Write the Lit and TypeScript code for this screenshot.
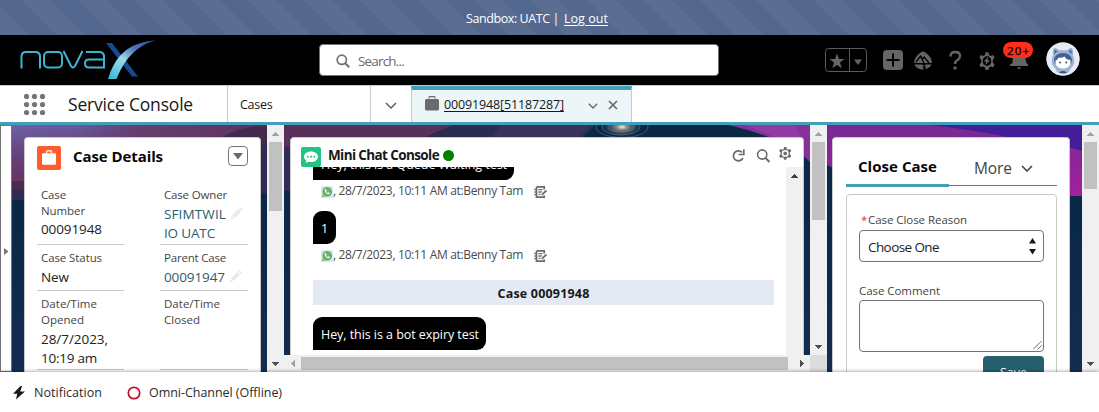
import { LitElement, html, css, svg } from "lit";
import { customElement, property } from "lit/decorators.js";

/** One line of text whose tracking is tuned to a given advance width. */
@customElement("ui-text")
class UiText extends LitElement {
  @property({ type: Number }) w = 0;
  static styles = css`
    :host { display: inline-block; white-space: pre; vertical-align: top; flex: none; }
    span { display: inline-block; }
    :host([link]) span { text-decoration: underline; text-underline-offset: 2px; }
  `;
  render() { return html`<span><slot></slot></span>`; }
  firstUpdated() {
    const n = (this.textContent || "").length;
    const natural = this.renderRoot.querySelector("span")!.getBoundingClientRect().width;
    if (this.w && n) {
      this.style.letterSpacing = `${(this.w - natural) / n}px`;
      this.style.width = `${this.w}px`;
    }
  }
}

@customElement("scroll-bar")
class ScrollBar extends LitElement {
  @property({ type: Number }) thumb = 0;
  @property({ type: Boolean }) noend = false;
  @property({ type: Boolean }) active = false;
  static styles = css`
    :host { display: flex; flex-direction: column; align-items: center; width: 17px; background: #f0f0f0; box-sizing: border-box; flex: none; }
    svg { display: block; width: 17px; height: 17px; flex: none; }
    .thumb { width: 13px; background: #c1c1c1; flex: none; }
    .space { flex: 1; }
  `;
  render() {
    return html`
      <svg viewBox="0 0 17 17" shape-rendering="crispEdges"><path d="M5 11h7v-1h-1v-1h-1v-1H9V7H8v1H7v1H6v1H5z" fill=${this.active ? "#404040" : "#a3a3a3"}/></svg>
      <div class="thumb" style="height:${this.thumb}px"></div>
      <div class="space"></div>
      ${this.noend ? "" : html`<svg viewBox="0 0 17 17" shape-rendering="crispEdges"><path d="M5 7h7v1h-1v1h-1v1H9v1H8v-1H7V9H6V8H5z" fill="#505050"/></svg>`}
    `;
  }
}

const chevron = (w: number, c: string, sw = 1.6) => html`<svg width=${w} height=${w * 0.6} viewBox="0 0 12 7.2" fill="none" stroke=${c} stroke-width=${sw}><path d="M1 1l5 5 5-5"/></svg>`;

const searchIcon = (s: number, c = "#6f6f6f") => html`<svg width=${s} height=${s} viewBox="0 0 14 14" fill="none" stroke=${c} stroke-width="1.7"><circle cx="5.8" cy="5.8" r="4.6"/><path d="M9.2 9.2l4 4" stroke-width="2"/></svg>`;

const gearPath = svg`<path fill-rule="evenodd" d="M7.6 0h2.8l.6 2.4 1.6.9 2.6-.8 1.4 2.4-1.8 1.9v2.4l1.8 1.9-1.4 2.4-2.6-.8-1.6.9-.6 2.4H7.600l-.6-2.4-1.600-.9-2.600.8-1.400-2.400 1.800-1.900V6.800L1.400 4.900l1.400-2.400 2.600.8 1.600-.9zM9 3.700a4.300 4.300 0 100 8.600 4.300 4.300 0 000-8.600z"/>`;

const pencil = html`<svg class="pencil" width="13" height="13" viewBox="0 0 13 13" fill="#e9e9e9"><path d="M2 8.300l6.300-6.300 2.700 2.700L4.700 11zM9 1.300l.9-.9q.5-.4 1 0l1.700 1.700q.4.5 0 1l-.9.9zM1.500 9.200l2.300 2.300-3.300 1z"/></svg>`;

const whatsapp = html`<svg width="12" height="12" viewBox="0 0 12 12"><rect width="12" height="12" fill="#dfe8ee"/><circle cx="6.200" cy="5.800" r="4.900" fill="#69b46c"/><path d="M.6 11.600l1-3.800 2.800 2.800z" fill="#8cc58e"/><path d="M4 3.200q-.9 1.100.3 2.700 1.500 2.200 3.300 2.400 1.300-.2 1.200-1.300L7.400 6.300l-.7.700Q5.600 6.500 5.100 5.400l.5-.7-.6-1.500z" fill="#fff"/></svg>`;

const noteIcon = html`<svg width="13" height="12" viewBox="0 0 13 12" fill="none" stroke="#6b6b6b"><path d="M2.500.9h7.700v2.600M2.500.9v10.200h7.700V9.400" stroke-width="1.700"/><path d="M.3 3.300h2.500M.3 6h2.500M.3 8.700h2.500" stroke-width="1.300"/><path d="M4.500 3.700h4M4.500 6h3.200M4.500 8.300h2" stroke-width="1.300"/><path d="M7.800 8.900l4.700-4.400" stroke-width="1.800"/></svg>`;

const meta = html`<div class="meta">${whatsapp}<ui-text w="190">, 28/7/2023, 10:11 AM at:Benny Tam</ui-text>${noteIcon}</div>`;

@customElement("app-root")
class AppRoot extends LitElement {
  static styles = css`
    :host { display: flex; flex-direction: column; width: 1099px; height: 412px; overflow: hidden; background: #fff;
      font-family: "Open Sans", "Noto Sans", sans-serif; font-size: 13px; color: #181818; box-sizing: border-box; }
    *, *::before { box-sizing: border-box; }
    svg { display: block; flex: none; }
    .banner { height: 35px; flex: none; display: flex; justify-content: center; padding: 10px 25px 0 0; line-height: 18px; color: #fff; gap: 5px; font-size: 12.500px;
      background: repeating-linear-gradient(45deg, #5b6e91 0 20px, #54688f 20px 40px); }
    .header { height: 50px; flex: none; background: #000; display: flex; }
    .logo { margin-left: 18px; width: 140px; }
    .search { margin: 9px 0 0 161px; width: 400px; height: 32px; background: #fff; border: 1px solid #747474; border-radius: 4px; display: flex; align-items: center; padding: 2px 0 0 16px; gap: 8px; font-size: 13.500px; color: #6b6b6b; }
    .tools { margin-left: 106px; display: flex; height: 50px; }
    .nav { height: 40px; flex: none; border-top: 1px solid #c9c9c9; border-bottom: 3px solid #419fb9; display: flex; background: #fff; }
    .waffle { margin: 8px 0 0 24px; }
    .app { margin-left: 22px; width: 157px; font-size: 17.500px; line-height: 37px; }
    .cases { width: 143px; margin-left: 2px; border-left: 1px solid #c9c9c9; padding-left: 12px; font-size: 12.500px; line-height: 38px; }
    .drop { width: 41px; border-left: 1px solid #c9c9c9; padding: 16px 0 0 14px; }
    .tab { width: 221px; border-left: 1px solid #c9c9c9; border-right: 1px solid #c9c9c9; border-top: 4px solid #419fb9; background: #ecf5f8; display: flex; padding-left: 13px; line-height: 30px; font-size: 12.500px; }
    .tab .case { margin: 6px 5px 0 0; }
    .tab .chev { margin: 13px 10px 0 24px; }
    .tab .x { margin-top: 10px; }
    .stage { height: 247px; flex: none; display: grid; grid-template: 247px / 1099px; overflow: hidden; }
    .stage > * { grid-area: 1 / 1; }
    .cols { display: flex; height: 247px; }
    .rail { width: 12px; border: 1px solid #747474; background: #fff; padding: 122px 0 0 3px; }
    .card { background: #fff; border: 1px solid #c9c9c9; border-bottom: 0; border-radius: 4px 4px 0 0; margin-top: 12px; overflow: hidden; height: 235px; flex: none; }
    .details { width: 237px; margin-left: 12px; margin-right: 6px; padding: 8px 12px 0; }
    .dhead { display: flex; height: 24px; align-items: flex-start; }
    .dhead .title { font-weight: 700; font-size: 15px; line-height: 20px; margin-left: 12px; flex: 1; color: #080707; }
    .menu { width: 20px; height: 20px; border: 1px solid #747474; border-radius: 4px; padding: 6px 0 0 4px; }
    .fields { display: grid; grid-template-columns: 87px 88px; column-gap: 36px; margin-top: 12px; }
    .cell { border-bottom: 1px solid #c9c9c9; padding: 5px 0 0 4px; }
    .cell.a { height: 63px; } .cell.b { height: 46px; } .cell.c { height: 79px; }
    .lab { font-size: 11.500px; line-height: 16px; color: #444; display: flex; flex-direction: column; align-items: flex-start; }
    .val { margin-top: 1px; padding-top: 1px; font-size: 13.500px; line-height: 19px; color: #222; display: flex; flex-direction: column; align-items: flex-start; }
    .val.tight { padding-top: 0; }
    .val.link { color: #26606f; }
    .row { display: flex; }
    .pencil { margin: 2px 0 0 4px; }
    .center { display: flex; flex-direction: column; width: 526px; flex: none; }
    .chatwrap { height: 230px; overflow: hidden; padding-left: 6px; }
    .chat { width: 514px; height: 218px; display: flex; flex-direction: column; }
    .chead { height: 29px; flex: none; display: flex; padding: 9px 0 0 10px; font-weight: 700; font-size: 13.500px; line-height: 16px; }
    .chead .icon { height: 20px; }
    .name { margin-left: 7px; height: 16px; }
    .dot { width: 11px; height: 11px; border-radius: 50%; background: #008000; margin: 3px 0 0 4px; }
    .cicons { margin-left: auto; display: flex; padding-right: 11px; }
    .cbody { display: flex; height: 188px; }
    .msgs { width: 495px; height: 188px; padding-left: 22px; overflow: hidden; flex: none; display: flex; flex-direction: column; align-items: flex-start; }
    .bubble { background: #000; color: #fff; height: 33px; border-radius: 9px 9px 9px 0; padding: 0 7px 0 8px; line-height: 35px; font-size: 12.500px; flex: none; }
    .bubble.first { margin-top: -20px; }
    .meta { display: flex; height: 31px; padding: 5px 0 0 8px; line-height: 12px; font-size: 12px; color: #4a4a4a; align-items: flex-start; flex: none; }
    .meta ui-text { margin-right: 11px; }
    .meta svg { margin-top: 1px; }
    .sep { width: 461px; height: 25px; background: #e5e9f3; margin: 5px 0 12px; text-align: center; font-weight: 700; font-size: 12.500px; line-height: 27px; flex: none; }
    .hbar { height: 17px; background: #f0f0f0; display: flex; align-items: center; }
    .hthumb { width: 487px; height: 13px; background: #c1c1c1; }
    .mid { display: flex; flex-direction: column; width: 17px; }
    .mid scroll-bar { height: 230px; }
    .corner { height: 17px; background: #dcdcdc; }
    .close { width: 238px; margin: 12px 12px 0 5px; padding-left: 13px; }
    .tabs { display: flex; width: 211px; height: 49px; }
    .t1 { width: 103px; height: 49px; border-bottom: 3px solid #419fb9; padding: 17px 0 0 12px; font-weight: 700; font-size: 15px; line-height: 22px; color: #080707; }
    .t2 { width: 108px; height: 48px; border-bottom: 1px solid #747474; padding: 19px 0 0 25px; font-size: 15.500px; line-height: 22px; color: #444; display: flex; }
    .t2 svg { margin: 8px 0 0 9px; }
    .form { width: 211px; height: 200px; border: 1px solid #c9c9c9; border-radius: 4px; margin-top: 7px; padding: 16px 12px 0; }
    .form .lab { flex-direction: row; line-height: 18px; }
    .req { color: #c23934; width: 7px; margin-left: 2px; }
    .select { height: 32px; border: 1px solid #747474; border-radius: 4px; margin-top: 1px; padding: 0 7px 0 8px; display: flex; justify-content: space-between; line-height: 32px; font-size: 13.500px; color: #222; }
    .select svg { margin-top: 6px; }
    .area { height: 52px; border: 1px solid #747474; border-radius: 4px; display: flex; justify-content: flex-end; align-items: flex-end; padding: 1px; }
    .form .lab.cc { margin-top: 20px; height: 18px; }
    .save { margin: 4px 0 0 124px; width: 61px; height: 32px; background: #26606f; border-radius: 4px; color: #fff; padding-left: 17px; line-height: 33px; font-size: 12.500px; }
    .footer { height: 40px; flex: none; background: #fff; display: flex; line-height: 41px; padding-left: 13px; font-size: 12.500px; color: #2b2b2b; box-shadow: 0 -1px 3px rgba(0,0,0,.3); z-index: 1; }
    .bolt { margin-top: 14px; }
    .notif { margin-left: 9px; }
    .ring { margin: 14px 8px 0 25px; }
  `;

  private background() {
    return html`<svg width="1099" height="247" viewBox="0 125 1099 247">
      <defs>
        <linearGradient id="navy" x1="0" y1="0" x2="0" y2="1"><stop offset="0" stop-color="#0b2746"/><stop offset=".4" stop-color="#0a2848"/><stop offset="1" stop-color="#132d50"/></linearGradient>
        <linearGradient id="sky" x1="0" y1="0" x2=".35" y2="1"><stop offset="0" stop-color="#6d62a6"/><stop offset=".5" stop-color="#64417a"/><stop offset="1" stop-color="#693258"/></linearGradient>
        <linearGradient id="mag" x1="0" y1="0" x2="0" y2="1"><stop offset="0" stop-color="#742b92"/><stop offset="1" stop-color="#a3209f"/></linearGradient>
        <linearGradient id="plum" x1="0" y1="0" x2="1" y2="0"><stop offset="0" stop-color="#65427d" stop-opacity="0"/><stop offset=".3" stop-color="#65406f"/><stop offset="1" stop-color="#5f3062"/></linearGradient>
        <radialGradient id="glow"><stop offset="0" stop-color="#fff1d0"/><stop offset=".25" stop-color="#a39a91" stop-opacity=".9"/><stop offset="1" stop-color="#2d4a68" stop-opacity="0"/></radialGradient>
      </defs>
      <rect y="125" width="1099" height="247" fill="url(#navy)"/>
      <rect x="12" y="125" width="160" height="57" fill="url(#sky)"/>
      <rect x="80" y="125" width="187" height="30" fill="url(#plum)"/>
      <rect x="12" y="181" width="20" height="9" fill="#50294f"/>
      <rect x="12" y="190" width="20" height="10" fill="#322c50"/>
      <path d="M222 137q20-11 45-11v20h-45z" fill="#432a4c"/>
      <rect x="260" y="145" width="8" height="48" fill="#302b52"/>
      <path d="M284 125h170l-28 12h-136v12h-6z" fill="#58305a"/>
      <path d="M454 125h136l-10 12H426z" fill="#2c2b50"/>
      <rect x="284" y="147" width="7" height="44" fill="#302c57"/>
      <path d="M500 125h95l-12 12h-90z" fill="#423b61" opacity=".55"/>
      <ellipse cx="622" cy="127" rx="20" ry="10" fill="url(#glow)"/>
      <g fill="none" stroke="#7d8794" stroke-width=".8" opacity=".6"><ellipse cx="621" cy="127" rx="13" ry="5"/><ellipse cx="621" cy="127" rx="19" ry="8"/><ellipse cx="622" cy="127" rx="26" ry="10.500"/></g>
      <path d="M728 125h82v37l-10-10q-28-17-72-27z" fill="#86309c"/>
      <path d="M745 125h50q4 8 6 12h-26z" fill="#a04bb0" opacity=".4"/>
      <path d="M827 125h255v71h-14v-59H833v31l-6-3z" fill="url(#mag)"/>
      <path d="M930 125h152v26l-14-4v-10h-60q-34-7-78-12z" fill="#421f98"/>
    </svg>`;
  }

  render() {
    return html`
      <div class="banner"><ui-text w="93">Sandbox: UATC |</ui-text><ui-text link w="44">Log out</ui-text></div>
      <div class="header">
        <svg class="logo" width="140" height="50" viewBox="18 35 140 50">
          <defs><linearGradient id="sw" x1="0" y1="1" x2="1" y2="0"><stop offset="0" stop-color="#35b5d6"/><stop offset=".42" stop-color="#9bdcea"/><stop offset=".65" stop-color="#5578bd"/><stop offset="1" stop-color="#26469a"/></linearGradient></defs>
          <g fill="none" stroke="#3fb3d3" stroke-width="2">
            <path d="M21.500 68.500V56.500q0-4.500 4.500-4.500h9.500q4.500 0 4.500 4.500v12"/>
            <rect x="44" y="52" width="18" height="15.500" rx="4"/>
            <path d="M63.500 51l7.500 15q2 3 4 0l7.500-15"/>
            <path d="M86 52h13q5 0 5 4.500v11H89q-4 0-4-4t4-4h15"/>
          </g>
          <path d="M106 43h6l26 33.500h-6z" fill="#154a93"/>
          <path d="M108 79q8-28 31-35.500 9-3.200 16.500-3-13 3.500-22 12-10 9-17 26.500z" fill="url(#sw)"/>
        </svg>
        <div class="search">${searchIcon(14)}<ui-text w="46">Search...</ui-text></div>
        <svg class="tools" width="274" height="50" viewBox="825 35 274 50">
          <g fill="none" stroke="#5c5c5c"><rect x="825.500" y="48.500" width="41" height="23" rx="3"/><path d="M849.500 48.500v23"/></g>
          <g fill="#656565">
            <path d="M837 53.500l1.900 5.500h5.600l-4.500 3.600 1.700 5.600-4.700-3.300-4.700 3.300 1.700-5.600-4.500-3.600h5.600z"/>
            <path d="M854 59.500h8l-4 5.500z"/>
            <rect x="883" y="50" width="20" height="20" rx="4"/>
          </g>
          <path d="M893 53.500v13M886.500 60h13" stroke="#000" stroke-width="2"/>
          <path d="M914 63q.5-6 6-10 3-3 6 0 5.500 4 6 10z" fill="#656565"/>
          <path d="M916 62l4.500-6 2.200 3 1.500-2 4.800 6M920.500 56.500l3.500 6.500" stroke="#000" stroke-width="1.300" fill="none"/>
          <path d="M914.300 64.500h8l2 1.500-2 1 2 2.500q-7 .5-10-5zM926 69q4-1 5.700-4.500h-6.500l-.8.800 2 .7-1.500.8z" fill="#656565"/>
          <path d="M950.500 56.500q0-4.500 4.700-4.500 4.800 0 4.800 4 0 2.500-2.500 4-2.500 1.300-2.500 4" fill="none" stroke="#656565" stroke-width="2.400"/><circle cx="955" cy="68" r="1.700" fill="#656565"/>
          <g transform="translate(978 52)" fill="#656565"><g transform="translate(0 .2) scale(1 1.120)">${gearPath}</g><path d="M10.200 4.800L5.800 9.600h2.400l-.8 3.600 4.600-5h-2.500z"/></g>
          <path d="M1012.500 63q0-3 .5-7 1-4.500 6-4.500t6 4.500q.5 4 1.500 7l1.500 1.500v1.500h-18v-1.500z" fill="#656565"/><path d="M1016.500 67.500h5q-2.500 3-5 0z" fill="#656565"/>
          <rect x="1003" y="42" width="30" height="16" rx="8" fill="#ff2d1a"/>
          <text x="1007" y="54.500" font-size="11.500" fill="#000" stroke="#000" stroke-width=".25" textLength="22">20+</text>
          <circle cx="1063" cy="59" r="16.500" fill="#e8edf3"/>
          <path d="M1053.500 48.500l2-.8 3.800 2.600h7.400l3.800-2.600 2 .8q1.200 3.500.5 7 3.500 8-2 12.500l-4 7h-8l-4-7q-5.500-4.500-2-12.500-.7-3.500.5-7z" fill="#9db2d6"/>
          <path d="M1054.500 49.500l3 1.800-3 3zM1071.500 49.500l-3 1.800 3 3z" fill="#4a6a9a"/>
          <ellipse cx="1063" cy="60" rx="9" ry="7" fill="#40608f"/>
          <path d="M1055.500 60q1 1.200 3-2.500 3 1 6-1 2 3.500 6 3.500 1 8.500-7.500 8.500t-7.500-8.500z" fill="#fff"/>
          <circle cx="1060" cy="62.500" r="1" fill="#35547f"/><circle cx="1066.300" cy="62.500" r="1" fill="#35547f"/>
          <path d="M1059 74.500q0-3.500 4-3.500t4 3.500z" fill="#35547f"/>
          <circle cx="1063" cy="59" r="15.500" fill="none" stroke="#e8edf3" stroke-width="2"/>
        </svg>
      </div>
      <div class="nav">
        <svg class="waffle" width="22" height="22" viewBox="0 0 22 22" fill="#747474">${[2.5, 10.5, 18.5].map(y => [2.5, 10.5, 18.5].map(x => svg`<circle cx=${x} cy=${y} r="2.600"/>`))}</svg>
        <div class="app"><ui-text w="125">Service Console</ui-text></div>
        <div class="cases"><ui-text w="32.500">Cases</ui-text></div>
        <div class="drop">${chevron(12, "#666")}</div>
        <div class="tab">
          <svg class="case" width="14" height="15" viewBox="0 0 14 15" fill="#6b6b6b"><path d="M4 2.500V1.400Q4 .6 5 .6h4q1 0 1 .8v1.100" fill="none" stroke="#6b6b6b" stroke-width="1.100"/><rect y="3" width="14" height="11.500" rx="1.500"/></svg>
          <ui-text link w="120">00091948[51187287]</ui-text>
          <span class="chev">${chevron(10, "#666")}</span>
          <svg class="x" width="10" height="10" viewBox="0 0 10 10" stroke="#666" stroke-width="1.600"><path d="M1 1l8 8M9 1L1 9"/></svg>
        </div>
      </div>
      <div class="stage">
        ${this.background()}
        <div class="cols">
          <div class="rail"><svg width="5" height="7" viewBox="0 0 5 7"><path d="M0 0v7l4.500-3.500z" fill="#747474"/></svg></div>
          <section class="card details">
            <div class="dhead">
              <svg width="24" height="24" viewBox="0 0 24 24"><rect width="24" height="24" rx="2" fill="#ff5d2d"/><path d="M9.500 7V5.500q0-.7.7-.7h3.600q.7 0 .7.700V7" fill="none" stroke="#fff" stroke-width="1.200"/><rect x="5" y="7.200" width="14" height="11.500" rx="1.300" fill="#fff"/></svg>
              <span class="title"><ui-text w="90">Case Details</ui-text></span>
              <div class="menu"><svg width="10" height="7" viewBox="0 0 10 7"><path d="M0 0h10L5 6.500z" fill="#6b6b6b"/></svg></div>
            </div>
            <div class="fields">
              <div class="cell a"><div class="lab"><ui-text w="25">Case</ui-text><ui-text w="44">Number</ui-text></div><div class="val tight"><ui-text w="61">00091948</ui-text></div></div>
              <div class="cell a"><div class="lab"><ui-text w="63">Case Owner</ui-text></div><div class="val link"><div class="row"><ui-text w="62">SFIMTWIL</ui-text>${pencil}</div><ui-text w="51">IO UATC</ui-text></div></div>
              <div class="cell b"><div class="lab"><ui-text w="61">Case Status</ui-text></div><div class="val"><ui-text w="28">New</ui-text></div></div>
              <div class="cell b"><div class="lab"><ui-text w="62">Parent Case</ui-text></div><div class="val link"><div class="row"><ui-text w="61">00091947</ui-text>${pencil}</div></div></div>
              <div class="cell c"><div class="lab"><ui-text w="56">Date/Time</ui-text><ui-text w="43">Opened</ui-text></div><div class="val"><ui-text w="67">28/7/2023,</ui-text><ui-text w="56">10:19 am</ui-text></div></div>
              <div class="cell c"><div class="lab"><ui-text w="56">Date/Time</ui-text><ui-text w="36">Closed</ui-text></div></div>
            </div>
          </section>
          <scroll-bar thumb="69"></scroll-bar>
          <div class="center">
            <div class="chatwrap">
              <section class="card chat">
                <div class="chead">
                  <svg class="icon" width="20" height="20" viewBox="0 0 20 20"><rect width="20" height="20" rx="2" fill="#22c383"/><path d="M10 4.500c4 0 7 2.300 7 5.200s-3 5.300-7 5.300q-1 0-2-.2L4.500 16l.8-2.500Q3 12 3 9.700c0-2.900 3-5.200 7-5.200z" fill="#fff"/><g fill="#22c383"><circle cx="6.800" cy="9.800" r="1"/><circle cx="10" cy="9.800" r="1"/><circle cx="13.200" cy="9.800" r="1"/></g></svg>
                  <ui-text w="111" class="name">Mini Chat Console</ui-text><span class="dot"></span>
                  <div class="cicons">
                    <svg width="60" height="18" viewBox="733 146 60 18" fill="none" stroke="#6b6b6b">
                      <path d="M743 151.300a5 5 0 10.900 5.700" stroke-width="1.700"/><path d="M739.500 153.500h5.300v-5.200" stroke-width="1.700"/>
                      <circle cx="763.200" cy="153.500" r="4.600" stroke-width="1.600"/><path d="M766.500 157l4 4" stroke-width="1.900"/>
                      <g transform="translate(779 146) scale(.8)" fill="#6b6b6b" stroke="none">${gearPath}<circle cx="9" cy="8" r="2.300"/></g>
                    </svg>
                  </div>
                </div>
                <div class="cbody">
                  <div class="msgs">
                    <div class="bubble first"><ui-text w="186">Hey, this is a Queue Waiting test</ui-text></div>
                    ${meta}
                    <div class="bubble"><ui-text w="8">1</ui-text></div>
                    ${meta}
                    <div class="sep"><ui-text w="92">Case 00091948</ui-text></div>
                    <div class="bubble"><ui-text w="158">Hey, this is a bot expiry test</ui-text></div>
                  </div>
                  <scroll-bar noend active></scroll-bar>
                </div>
              </section>
            </div>
            <div class="hbar">
              <svg width="17" height="17" viewBox="0 0 17 17" shape-rendering="crispEdges"><path d="M11 5v7h-1v-1H9v-1H8V9H7V8h1V7h1V6h1V5z" fill="#a3a3a3"/></svg>
              <div class="hthumb"></div><svg width="22" height="17" viewBox="0 0 22 17" shape-rendering="crispEdges"><path d="M12 5v7h1v-1h1v-1h1V9h1V8h-1V7h-1V6h-1V5z" fill="#505050"/></svg>
            </div>
          </div>
          <div class="mid"><scroll-bar thumb="78"></scroll-bar><div class="corner"></div></div>
          <section class="card close">
            <div class="tabs"><div class="t1"><ui-text w="79">Close Case</ui-text></div><div class="t2"><ui-text w="38">More</ui-text>${chevron(12, "#444")}</div></div>
            <div class="form">
              <div class="lab"><span class="req">*</span><ui-text w="99">Case Close Reason</ui-text></div>
              <div class="select"><ui-text w="71">Choose One</ui-text><svg width="7" height="18" viewBox="0 0 7 18"><path d="M0 6.500L3.500 1 7 6.500zM0 12h7l-3.500 5.500z" fill="#181818"/></svg></div>
              <div class="lab cc"><ui-text w="81">Case Comment</ui-text></div>
              <div class="area"><svg width="9" height="9" viewBox="0 0 9 9" stroke="#6b6b6b"><path d="M0 8.500L8.500 0M4.500 8.500l4-4"/></svg></div>
              <div class="save"><ui-text w="27">Save</ui-text></div>
            </div>
          </section>
          <scroll-bar thumb="47"></scroll-bar>
        </div>
      </div>
      <div class="footer">
        <svg class="bolt" width="12" height="14" viewBox="0 0 12 14" fill="#181818"><path d="M7.500 0L0 7.800h4.200L3 13.500l9-8H7.200L9 0z"/></svg>
        <ui-text w="68" class="notif">Notification</ui-text>
        <svg class="ring" width="14" height="14" viewBox="0 0 14 14"><circle cx="7" cy="7" r="5.700" fill="none" stroke="#c20f2b" stroke-width="1.700"/></svg>
        <ui-text w="133">Omni-Channel (Offline)</ui-text>
      </div>
    `;
  }
}
